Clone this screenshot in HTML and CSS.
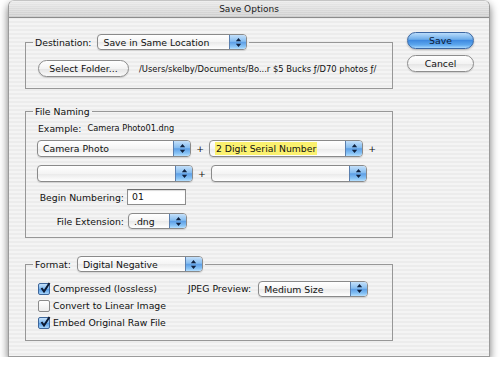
FILE: index.html
```html
<!DOCTYPE html>
<html lang="en">
<head>
    <meta charset="UTF-8">
    <title>Save Options</title>
    <link rel="stylesheet" href="styles.css">
</head>
<body>
    <div class="window">
        <div class="titlebar">Save Options</div>
        <div class="content">
            <div class="groups">
                <!-- Destination -->
                <fieldset class="group group-dest">
                    <legend class="legend">
                        <span class="label">Destination:</span>
                        <span class="popup popup-dest">
                            <span class="popup-value">Save in Same Location</span>
                            <span class="popup-arrows"><svg width="7" height="11" viewBox="0 0 7 11"><path d="M3.5 1 L6.2 4.3 H0.8Z M0.8 6.7 H6.2 L3.5 10Z" fill="#10223f"/></svg></span>
                        </span>
                    </legend>
                    <div class="dest-row">
                        <button class="pill pill-plain pill-folder">Select Folder...</button>
                        <span class="path">/Users/skelby/Documents/Bo...r $5 Bucks ƒ/D70 photos ƒ/</span>
                    </div>
                </fieldset>

                <!-- File Naming -->
                <fieldset class="group group-naming">
                    <legend class="legend"><span class="label">File Naming</span></legend>
                    <div class="example">
                        <span class="label">Example:</span>
                        <span class="example-value">Camera Photo01.dng</span>
                    </div>
                    <div class="naming-row">
                        <span class="popup popup-name">
                            <span class="popup-value">Camera Photo</span>
                            <span class="popup-arrows"><svg width="7" height="11" viewBox="0 0 7 11"><path d="M3.5 1 L6.2 4.3 H0.8Z M0.8 6.7 H6.2 L3.5 10Z" fill="#10223f"/></svg></span>
                        </span>
                        <span class="plus">+</span>
                        <span class="popup popup-name">
                            <span class="popup-value"><span class="highlight">2 Digit Serial Number</span></span>
                            <span class="popup-arrows"><svg width="7" height="11" viewBox="0 0 7 11"><path d="M3.5 1 L6.2 4.3 H0.8Z M0.8 6.7 H6.2 L3.5 10Z" fill="#10223f"/></svg></span>
                        </span>
                        <span class="plus">+</span>
                    </div>
                    <div class="naming-row">
                        <span class="popup popup-name">
                            <span class="popup-value"></span>
                            <span class="popup-arrows"><svg width="7" height="11" viewBox="0 0 7 11"><path d="M3.5 1 L6.2 4.3 H0.8Z M0.8 6.7 H6.2 L3.5 10Z" fill="#10223f"/></svg></span>
                        </span>
                        <span class="plus">+</span>
                        <span class="popup popup-name popup-blank">
                            <span class="popup-value"></span>
                            <span class="popup-arrows"><svg width="7" height="11" viewBox="0 0 7 11"><path d="M3.5 1 L6.2 4.3 H0.8Z M0.8 6.7 H6.2 L3.5 10Z" fill="#10223f"/></svg></span>
                        </span>
                    </div>
                    <div class="fields">
                        <span class="field-label">Begin Numbering:</span>
                        <span class="textbox">01</span>
                        <span class="field-label">File Extension:</span>
                        <span class="popup popup-ext">
                            <span class="popup-value">.dng</span>
                            <span class="popup-arrows"><svg width="7" height="11" viewBox="0 0 7 11"><path d="M3.5 1 L6.2 4.3 H0.8Z M0.8 6.7 H6.2 L3.5 10Z" fill="#10223f"/></svg></span>
                        </span>
                    </div>
                </fieldset>

                <!-- Format -->
                <fieldset class="group group-format">
                    <legend class="legend">
                        <span class="label">Format:</span>
                        <span class="popup popup-format">
                            <span class="popup-value">Digital Negative</span>
                            <span class="popup-arrows"><svg width="7" height="11" viewBox="0 0 7 11"><path d="M3.5 1 L6.2 4.3 H0.8Z M0.8 6.7 H6.2 L3.5 10Z" fill="#10223f"/></svg></span>
                        </span>
                    </legend>
                    <div class="format-body">
                        <div class="checks">
                            <label class="check"><span class="box box-on"><svg width="12" height="12" viewBox="0 0 12 12"><path d="M2.5 6 L5 9.5 L10.5 1" fill="none" stroke="#0c1a33" stroke-width="2"/></svg></span>Compressed (lossless)</label>
                            <label class="check"><span class="box"></span>Convert to Linear Image</label>
                            <label class="check"><span class="box box-on"><svg width="12" height="12" viewBox="0 0 12 12"><path d="M2.5 6 L5 9.5 L10.5 1" fill="none" stroke="#0c1a33" stroke-width="2"/></svg></span>Embed Original Raw File</label>
                        </div>
                        <div class="jpeg">
                            <span class="label">JPEG Preview:</span>
                            <span class="popup popup-jpeg">
                                <span class="popup-value">Medium Size</span>
                                <span class="popup-arrows"><svg width="7" height="11" viewBox="0 0 7 11"><path d="M3.5 1 L6.2 4.3 H0.8Z M0.8 6.7 H6.2 L3.5 10Z" fill="#10223f"/></svg></span>
                            </span>
                        </div>
                    </div>
                </fieldset>
            </div>

            <div class="actions">
                <button class="pill pill-blue">Save</button>
                <button class="pill pill-plain">Cancel</button>
            </div>
        </div>
    </div>
</body>
</html>
```

FILE: styles.css
```css
* {
    box-sizing: border-box;
}

body {
    margin: 0;
    background: #fff;
    font-family: "DejaVu Sans", sans-serif;
    font-size: 9.3px;
    color: #111;
}

.window {
    margin-left: 8px;
    width: 482px;
    height: 357px;
    border: 1px solid #9b9b9b;
    border-top-color: #c4c4c4;
    border-radius: 6px 6px 0 0;
    background: repeating-linear-gradient(to bottom, #ececec 0, #ececec 2px, #f4f4f4 2px, #f4f4f4 4px);
    box-shadow: 0 4px 9px rgba(0, 0, 0, 0.55);
    overflow: hidden;
}

.titlebar {
    height: 17px;
    line-height: 16px;
    text-align: center;
    font-size: 9px;
    color: #1a1a1a;
    background: repeating-linear-gradient(to bottom, rgba(255,255,255,0.25) 0, rgba(255,255,255,0.25) 1px, transparent 1px, transparent 2px),
                linear-gradient(to bottom, #eaeaea, #cdcdcd);
    border-bottom: 1px solid #8c8c8c;
}

.content {
    display: flex;
    padding: 16px 0 0 16px;
}

.groups {
    width: 368px;
    display: flex;
    flex-direction: column;
}

.group {
    margin: 0;
    min-width: 0;
    border: 1px solid #979797;
    padding: 10px 11px 11px 12px;
}

.legend {
    display: flex;
    align-items: center;
    gap: 6px;
    height: 16px;
    margin-left: -5px;
    padding: 0 2px;
}

/* popup menus */
.popup {
    display: flex;
    height: 17px;
    border: 1px solid #8a8a8a;
    border-radius: 4px;
    background: linear-gradient(to bottom, #ffffff 0%, #f4f4f4 50%, #e9e9e9 51%, #ffffff 100%);
    box-shadow: 0 1px 1px rgba(0, 0, 0, 0.12);
    overflow: hidden;
}

.popup-value {
    flex: 1;
    padding-left: 5px;
    line-height: 15px;
    white-space: nowrap;
}

.popup-arrows {
    width: 17px;
    display: flex;
    align-items: center;
    justify-content: center;
    border-left: 1px solid #5a7fae;
    background: linear-gradient(to bottom, #c4e0fa 0%, #86bdf0 45%, #5d9fe6 52%, #8cc6f6 85%, #b7e0ff 100%);
}

.popup-dest { width: 150px; height: 16px; }
.popup-format { width: 126px; height: 16px; }
.popup-name { width: 156px; margin-left: -1px; }
.popup-name + .plus + .popup-name { margin-left: 0; }
.popup-ext { width: 59px; height: 16px; }
.popup-jpeg { width: 110px; height: 16px; }

/* Destination */
.dest-row {
    display: flex;
    align-items: center;
    gap: 10px;
}

.path {
    font-size: 8.4px;
    white-space: nowrap;
}

/* File Naming */
.group-naming {
    margin-top: 14px;
    padding-top: 3px;
    padding-bottom: 8px;
}

.example {
    display: flex;
    align-items: center;
    gap: 6px;
    height: 12px;
    margin-bottom: 6px;
}

.example-value {
    font-size: 8.2px;
}

.naming-row {
    display: flex;
    align-items: center;
    margin-bottom: 8px;
}

.naming-row + .naming-row {
    margin-bottom: 7px;
}

.plus {
    width: 18px;
    text-align: center;
}

.highlight {
    background: #fbf16f;
    padding: 1px 1px;
}

.fields {
    display: grid;
    grid-template-columns: 86px auto;
    column-gap: 3px;
    row-gap: 8px;
    align-items: center;
    justify-items: start;
}

.field-label {
    justify-self: end;
}

.textbox {
    width: 59px;
    height: 16px;
    line-height: 14px;
    padding-left: 4px;
    background: #fff;
    border: 1px solid #8d8d8d;
    border-top-color: #6f6f6f;
    box-shadow: inset 0 1px 1px rgba(0, 0, 0, 0.15);
}

.fields .popup-ext {
    margin-left: 1px;
}

/* Format */
.group-format {
    margin-top: 18px;
    padding-top: 8px;
    padding-bottom: 9px;
}

.format-body {
    display: flex;
}

.checks {
    width: 150px;
    display: flex;
    flex-direction: column;
}

.check {
    display: flex;
    align-items: center;
    gap: 3px;
    height: 17px;
    white-space: nowrap;
}

.box {
    width: 12px;
    height: 12px;
    border: 1px solid #8b8b8b;
    border-radius: 2px;
    background: linear-gradient(to bottom, #ffffff, #ececec);
    position: relative;
}

.box svg {
    position: absolute;
    left: 0;
    top: -2px;
}

.box-on {
    border-color: #3e669a;
    background: linear-gradient(to bottom, #c6e2fb 0%, #7cb6ee 50%, #5a9ee6 55%, #a7d5fb 100%);
}

.jpeg {
    display: flex;
    align-items: center;
    gap: 7px;
    height: 17px;
}

/* buttons */
.actions {
    display: flex;
    flex-direction: column;
    gap: 6px;
    margin-left: 14px;
    margin-top: -2px;
}

.pill {
    font-family: inherit;
    font-size: 9.3px;
    height: 17px;
    padding: 0;
    border-radius: 9px;
    color: #111;
    cursor: pointer;
}

.actions .pill {
    width: 67px;
}

.pill-plain {
    border: 1px solid #8d8d8d;
    background: linear-gradient(to bottom, #ffffff 0%, #f3f3f3 50%, #e4e4e4 52%, #fafafa 100%);
    box-shadow: 0 1px 1px rgba(0, 0, 0, 0.15);
}

.pill-blue {
    color: #0d1b35;
    border: 1px solid #3c67a2;
    background: linear-gradient(to bottom, #b9dcfb 0%, #6faeea 42%, #3f8ae0 50%, #5ea8ee 80%, #a6d8ff 100%);
    box-shadow: 0 1px 2px rgba(0, 0, 0, 0.25);
}

.pill-folder {
    width: 91px;
}
```
